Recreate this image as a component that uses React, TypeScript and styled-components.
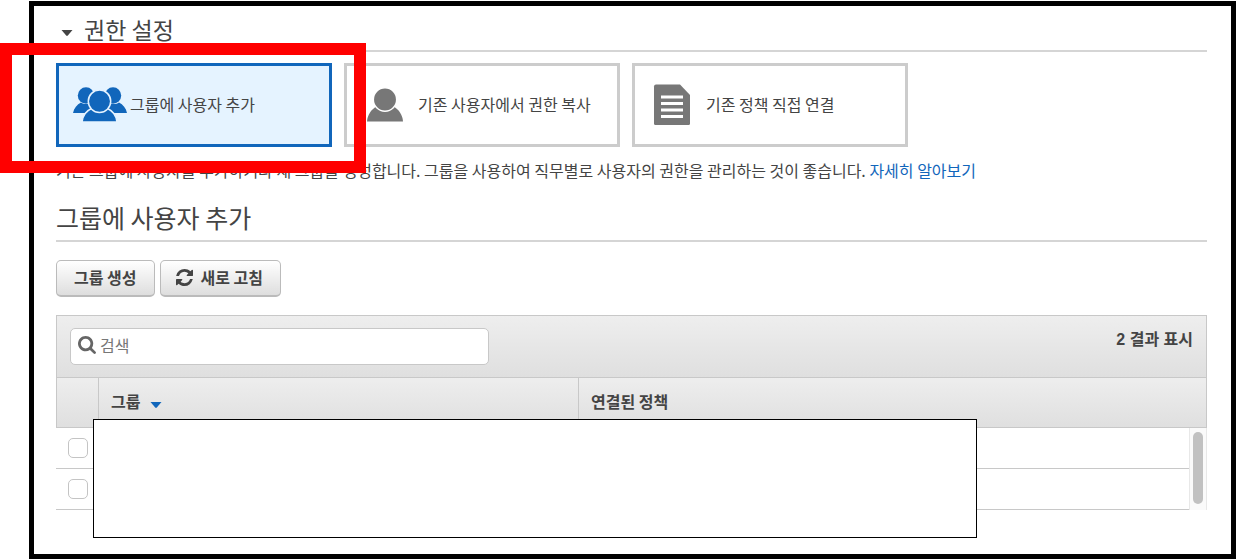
import React, { useState } from "react";
import styled, { createGlobalStyle } from "styled-components";

const GlobalStyle = createGlobalStyle`
  *, *::before, *::after { box-sizing: border-box; }
  body {
    margin: 0;
    background: #fff;
    color: #444;
    font: 16px/24px "Noto Sans CJK KR", "Noto Sans", sans-serif;
  }
  button, input { font: inherit; color: inherit; }
`;

const Page = styled.div`
  position: relative;
  padding: 1px 0 1px 29px;
`;

const Frame = styled.main`
  border: 5px solid #000;
  padding: 8px 24px 44px 22px;
`;

const PanelTitle = styled.h2`
  display: flex;
  align-items: center;
  margin: 0 0 11px;
  height: 38px;
  padding-bottom: 6px;
  border-bottom: 2px solid #d5d5d5;
  font-size: 23px;
  line-height: 30px;
  font-weight: 400;
`;

const Toggle = styled.button`
  display: flex;
  align-items: center;
  gap: 11px;
  padding: 0 0 0 5px;
  border: 0;
  background: none;
`;

const Triangle = styled.svg<{ $tone: string }>`
  display: block;
  flex: none;
  margin-top: 8px;
  fill: ${(p) => p.$tone};
`;

const Cards = styled.div`
  display: flex;
  gap: 12px;
`;

const Card = styled.button<{ $active?: boolean }>`
  display: flex;
  align-items: center;
  gap: 3px;
  width: 276px;
  height: 84px;
  padding: 0 14px;
  border: 3px solid ${(p) => (p.$active ? "#1166bb" : "#ccc")};
  background: ${(p) => (p.$active ? "#e5f3ff" : "#fff")};
  text-align: left;
`;

const CardIcon = styled.svg<{ $active?: boolean }>`
  flex: none;
  width: 54px;
  height: 42px;
  fill: ${(p) => (p.$active ? "#1166bb" : "#777")};
`;

const CardText = styled.span`
  padding-bottom: 2px;
`;

const Description = styled.p`
  margin: 11px 0 17px;
`;

const Link = styled.a`
  color: #1166bb;
  text-decoration: none;
`;

const SectionTitle = styled.h3`
  margin: 0 0 18px;
  padding-bottom: 5px;
  border-bottom: 2px solid #d5d5d5;
  font-size: 25px;
  line-height: 36px;
  font-weight: 400;
`;

const Actions = styled.div`
  display: flex;
  gap: 5px;
  margin-bottom: 18px;
`;

const ActionButton = styled.button`
  display: flex;
  align-items: center;
  gap: 8px;
  height: 37px;
  padding: 0 17px 2px;
  border: 1px solid #bbb;
  border-bottom-width: 2px;
  border-radius: 5px;
  background: linear-gradient(#fff, #dedede);
  font-weight: 700;
`;

const ButtonIcon = styled.svg`
  width: 17px;
  height: 17px;
  margin-left: -2px;
  fill: #444;
`;

const Toolbar = styled.div`
  display: flex;
  align-items: flex-start;
  justify-content: space-between;
  height: 62px;
  padding: 12px 13px;
  border: 1px solid #c8c8c8;
  border-bottom: 0;
  background: linear-gradient(#eee, #dfdfdf);
`;

const SearchBox = styled.label`
  display: flex;
  align-items: center;
  gap: 4px;
  width: 419px;
  height: 37px;
  padding: 0 7px 3px;
  border: 1px solid #c8c8c8;
  border-radius: 5px;
  background: #fff;
`;

const SearchIcon = styled.svg`
  flex: none;
  width: 18px;
  height: 18px;
  fill: #666;
`;

const SearchInput = styled.input`
  flex: 1;
  min-width: 0;
  padding: 0;
  border: 0;
  outline: 0;
  background: none;
  &::placeholder { color: #777; opacity: 1; }
`;

const ResultCount = styled.strong`
  font-family: "Liberation Sans", "Noto Sans CJK KR", sans-serif;
`;

const Table = styled.table`
  width: 100%;
  table-layout: fixed;
  border-collapse: separate;
  border-spacing: 0;
`;

const Col = styled.col<{ $width?: number }>`
  width: ${(p) => (p.$width ? `${p.$width}px` : "auto")};
`;

const HeadRow = styled.tr`
  background: linear-gradient(#eee, #dfdfdf);
`;

const HeadCell = styled.th`
  height: 51px;
  padding: 0 12px 3px;
  border: solid #c8c8c8;
  border-width: 1px 0 1px 1px;
  text-align: left;
  &:last-child { border-right-width: 1px; }
`;

const SortButton = styled.button`
  display: flex;
  align-items: center;
  gap: 10px;
  padding: 0;
  border: 0;
  background: none;
  font-weight: 700;
`;

const Cell = styled.td`
  height: 41px;
  padding: 0 0 1px 12px;
  border-bottom: 1px solid #c8c8c8;
`;

const Checkbox = styled.input`
  display: block;
  appearance: none;
  width: 20px;
  height: 20px;
  margin: 0;
  border: 1px solid #c4c4c4;
  border-radius: 5px;
  background: #fff;
`;

const ScrollTrack = styled.td`
  padding: 4px 3px 5px;
  border: solid #e8e8e8;
  border-width: 0 1px;
  background: #fafafa;
  vertical-align: top;
`;

const ScrollThumb = styled.div`
  width: 10px;
  height: 72px;
  border-radius: 5px;
  background: #c1c1c1;
`;

/* Opaque cover that hides the group names. */
const Cover = styled.div`
  position: absolute;
  top: 419px;
  left: 93px;
  right: 259px;
  height: 119px;
  border: 1px solid #000;
  background: #fff;
`;

/* Annotation outline around the first option. */
const Highlight = styled.div`
  position: absolute;
  top: 43px;
  left: 0;
  width: 366px;
  height: 130px;
  border: 12px solid #f00;
  pointer-events: none;
`;

const Down = ({ tone }: { tone: string }) => (
  <Triangle $tone={tone} width="12" height="6" viewBox="0 0 12 6" aria-hidden="true">
    <path d="M0.5 0h11L6.8 5.6q-.8.6-1.6 0z" />
  </Triangle>
);

const GroupIcon = () => (
  <CardIcon $active viewBox="0 0 54 42" aria-hidden="true">
    <circle cx="13" cy="11.5" r="8.2" />
    <circle cx="40" cy="11.5" r="8.2" />
    <path d="M0 29C1 24 4 20.500 8 18.500C11 20.500 15 20.500 18 18.500L24 29Z" />
    <path d="M54 29C53 24 50 20.500 46 18.500C43 20.500 39 20.500 36 18.500L30 29Z" />
    <g stroke="#e5f3ff" strokeWidth="1.500">
      <path d="M9 38.200C9.500 32 13 27 18.500 24.500H34.500C40 27 43.500 32 44 38.200Z" />
      <circle cx="26.500" cy="17.300" r="11.200" />
    </g>
    <path d="M8 37.500h37v2H8z" fill="#e5f3ff" />
  </CardIcon>
);

const UserIcon = () => (
  <CardIcon viewBox="0 0 54 42" aria-hidden="true">
    <path d="M6 37.500C6.500 31 10 25.500 15.500 22.500H32.500C38 25.500 41.500 31 42 37.500Z" />
    <circle cx="24" cy="15.500" r="11.700" stroke="#fff" strokeWidth="1.500" />
  </CardIcon>
);

const PolicyIcon = () => (
  <CardIcon viewBox="0 0 54 42" aria-hidden="true">
    <path d="M7 .500H31L41 11V39.500q0 1.500-1.500 1.500H6.500Q5 41 5 39.500V2.500Q5 .500 7 .500Z" />
    <path d="M12 11.500h22v3H12zM12 18h22v3H12zM12 24.500h22v3H12zM12 31h22v3H12z" fill="#fff" />
  </CardIcon>
);

const groups = ["그룹 1", "그룹 2"];

export default function App() {
  const [query, setQuery] = useState("");
  return (
    <Page>
      <GlobalStyle />
      <Frame>
        <PanelTitle>
          <Toggle type="button" aria-expanded="true">
            <Down tone="#444" />
            권한 설정
          </Toggle>
        </PanelTitle>

        <Cards>
          <Card type="button" $active aria-pressed="true">
            <GroupIcon />
            <CardText>그룹에 사용자 추가</CardText>
          </Card>
          <Card type="button" aria-pressed="false">
            <UserIcon />
            <CardText>기존 사용자에서 권한 복사</CardText>
          </Card>
          <Card type="button" aria-pressed="false">
            <PolicyIcon />
            <CardText>기존 정책 직접 연결</CardText>
          </Card>
        </Cards>

        <Description>
          기존 그룹에 사용자를 추가하거나 새 그룹을 생성합니다. 그룹을 사용하여 직무별로 사용자의 권한을 관리하는 것이
          좋습니다. <Link href="#learn-more">자세히 알아보기</Link>
        </Description>

        <SectionTitle>그룹에 사용자 추가</SectionTitle>

        <Actions>
          <ActionButton type="button">그룹 생성</ActionButton>
          <ActionButton type="button">
            <ButtonIcon viewBox="0 0 1536 1536" aria-hidden="true">
              <path d="M1511 928q0 5-1 7-64 268-268 434.500t-478 166.500q-146 0-282.500-55t-243.500-157l-129 129q-19 19-45 19t-45-19-19-45v-448q0-26 19-45t45-19h448q26 0 45 19t19 45-19 45l-137 137q71 66 161 102t187 36q134 0 250-65t186-179q11-17 53-117 8-23 30-23h192q13 0 22.500 9.500t9.500 22.500zm25-800v448q0 26-19 45t-45 19h-448q-26 0-45-19t-19-45 19-45l138-138q-148-137-349-137-134 0-250 65t-186 179q-11 17-53 117-8 23-30 23h-199q-13 0-22.500-9.500t-9.500-22.500v-7q65-268 270-434.500t480-166.500q146 0 284 55.500t245 156.500l130-129q19-19 45-19t45 19 19 45z" />
            </ButtonIcon>
            새로 고침
          </ActionButton>
        </Actions>

        <Toolbar>
          <SearchBox>
            <SearchIcon viewBox="64 128 1664 1664" aria-hidden="true">
              <path d="M1216 832q0-185-131.500-316.500t-316.500-131.500-316.500 131.500-131.500 316.500 131.500 316.500 316.500 131.500 316.500-131.500 131.500-316.500zm512 832q0 52-38 90t-90 38q-54 0-90-38l-343-342q-179 124-399 124-143 0-273.500-55.500t-225-150-150-225-55.500-273.500 55.500-273.500 150-225 225-150 273.500-55.500 273.500 55.500 225 150 150 225 55.500 273.500q0 220-124 399l343 343q37 37 37 90z" />
            </SearchIcon>
            <SearchInput
              type="text"
              aria-label="검색"
              placeholder="검색"
              value={query}
              onChange={(e) => setQuery(e.target.value)}
            />
          </SearchBox>
          <ResultCount>2 결과 표시</ResultCount>
        </Toolbar>

        <Table>
          <colgroup>
            <Col $width={42} />
            <Col $width={480} />
            <Col />
            <Col $width={18} />
          </colgroup>
          <thead>
            <HeadRow>
              <HeadCell scope="col" />
              <HeadCell scope="col">
                <SortButton type="button">
                  그룹
                  <Down tone="#1166bb" />
                </SortButton>
              </HeadCell>
              <HeadCell scope="col" colSpan={2}>
                연결된 정책
              </HeadCell>
            </HeadRow>
          </thead>
          <tbody>
            {groups.map((name, i) => (
              <tr key={name}>
                <Cell>
                  <Checkbox type="checkbox" aria-label={name} />
                </Cell>
                <Cell />
                <Cell />
                {i === 0 && (
                  <ScrollTrack rowSpan={groups.length}>
                    <ScrollThumb />
                  </ScrollTrack>
                )}
              </tr>
            ))}
          </tbody>
        </Table>
      </Frame>
      <Cover />
      <Highlight />
    </Page>
  );
}
